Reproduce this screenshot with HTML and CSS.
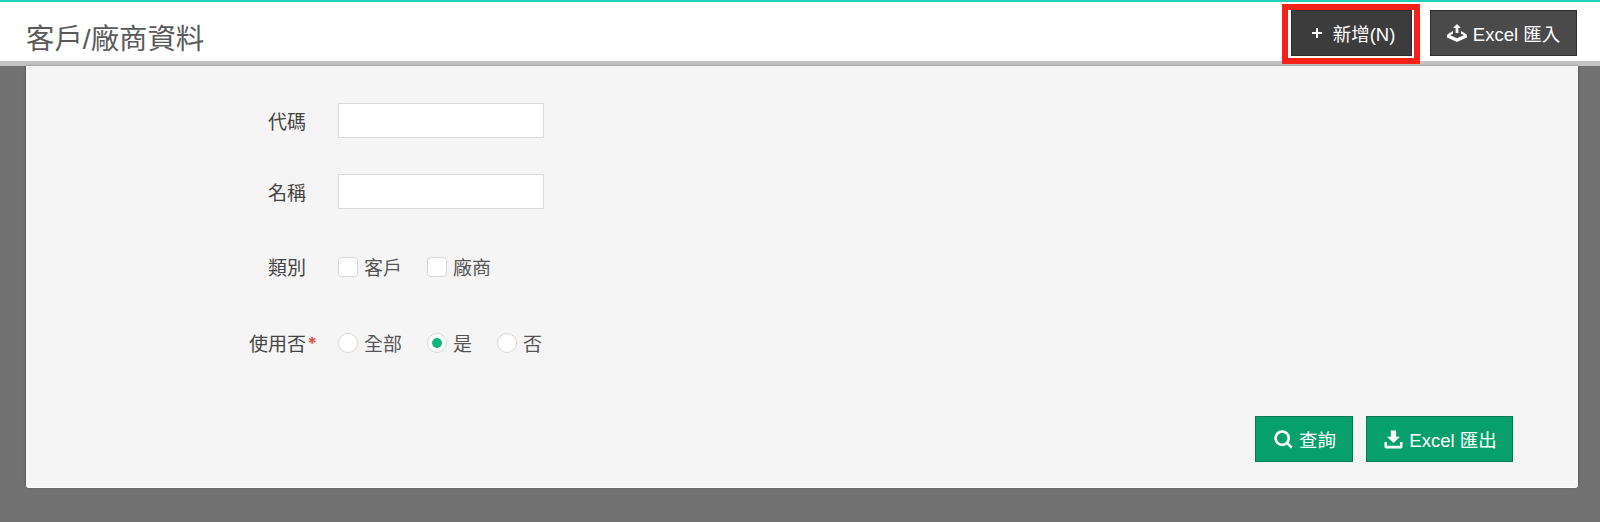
FILE: index.html
```html
<!DOCTYPE html>
<html lang="zh-Hant">
<head>
  <meta charset="UTF-8" />
  <title>客戶/廠商資料</title>
  <link rel="stylesheet" href="styles.css">
</head>
<body>

<header class="topbar">
  <h1>客戶/廠商資料</h1>
  <div class="topbar-actions">
    <button class="btn btn-dark btn-new" type="button">
      <svg class="icon-plus" viewBox="0 0 12 12"><path d="M6 1v10M1 6h10" /></svg>
      新增(N)
      <span class="mark"></span>
    </button>
    <button class="btn btn-dark btn-import" type="button">
      <svg class="icon" viewBox="0 0 20 18"><path d="M10 0l4 4h-2.6v5h-2.8v-5h-2.6z" /><path d="M6 7l-5 3q-1 .5-1 1.5v2l9 4.1q1 .4 2 0l9-4.1v-2q0-1-1-1.5l-5-3v2.5l2.8 1.8-6.8 3-6.8-3 2.8-1.8z" /></svg>
      Excel 匯入
    </button>
  </div>
</header>

<main class="panel">
  <form class="search-form">
    <div class="row row-code">
      <label>代碼</label>
      <input type="text" />
    </div>
    <div class="row row-name">
      <label>名稱</label>
      <input type="text" />
    </div>
    <div class="row row-type">
      <label>類別</label>
      <div class="options">
        <span class="option"><i class="check"></i>客戶</span>
        <span class="option"><i class="check"></i>廠商</span>
      </div>
    </div>
    <div class="row row-active">
      <label>使用否<span class="required">✱</span></label>
      <div class="options">
        <span class="option"><i class="radio"></i>全部</span>
        <span class="option option-short"><i class="radio on"></i>是</span>
        <span class="option"><i class="radio"></i>否</span>
      </div>
    </div>
    <div class="form-actions">
      <button class="btn btn-green btn-search" type="button">
        <svg class="icon" viewBox="0 0 20 20"><circle cx="8.6" cy="8.6" r="7" /><path d="M13.6 13.6l5 5" /></svg>
        查詢
      </button>
      <button class="btn btn-green btn-export" type="button">
        <svg class="icon icon-fill" viewBox="0 0 20 20"><path d="M7.2 0.5h5.6v6.6h4l-6.8 6.6-6.8-6.6h4z" /><path d="M0.5 12.5h2.6v4.2h13.8v-4.2h2.6v5.2a1.8 1.8 0 0 1-1.8 1.8h-15.4a1.8 1.8 0 0 1-1.8-1.8z" /></svg>
        Excel 匯出
      </button>
    </div>
  </form>
</main>

</body>
</html>
```

FILE: styles.css
```css
* {
  box-sizing: border-box;
  margin: 0;
  padding: 0;
}

body {
  height: 522px;
  overflow: hidden;
  background: #737272;
  color: #555;
  font-family: 'Liberation Sans', 'Noto Sans CJK TC', sans-serif;
  font-size: 19px;
}

/* Top bar */
.topbar {
  height: 66px;
  display: flex;
  justify-content: space-between;
  background: #fff;
  border-top: 2px solid #1fcfb6;
  border-bottom: 5px solid #c4c4c4;
  padding: 8px 23px 0 26px;
}

.topbar h1 {
  font-size: 28.4px;
  font-weight: 400;
  color: #5a5a5a;
  line-height: 40px;
  padding-top: 9px;
}

.topbar-actions {
  display: flex;
  gap: 18px;
}

.btn {
  height: 46px;
  display: inline-flex;
  align-items: center;
  justify-content: center;
  border: 1px solid;
  border-radius: 0;
  color: #fff;
  font-family: inherit;
  font-size: 18.5px;
}

.btn-dark {
  background: #4a4a4a;
  border-color: #2d2d2d;
}

.btn-new {
  position: relative;
  width: 121px;
  gap: 10px;
  padding-left: 3px;
  background: #3c3c3c;
}

.btn-import {
  width: 147px;
  gap: 6px;
}

.mark {
  position: absolute;
  top: -7px;
  left: -10px;
  right: -9px;
  bottom: -9px;
  border: 6px solid #f5211a;
}

.icon-plus {
  width: 12px;
  height: 12px;
  fill: none;
  stroke: #fff;
  stroke-width: 2;
}

.btn-import .icon {
  width: 20px;
  height: 18px;
  fill: #fff;
}

/* Panel */
.panel {
  height: 421px;
  margin: 0 22px 0 26px;
  background: #f5f5f5;
  border-radius: 0 0 3px 3px;
  box-shadow: 0 1px 0 #fff, 0 0 3px rgba(0, 0, 0, 0.35);
}

.search-form {
  padding-top: 37px;
}

.row {
  display: grid;
  grid-template-columns: 280px 1fr;
  column-gap: 32px;
  align-items: center;
  height: 35px;
}

.row label {
  position: relative;
  text-align: right;
  color: #444;
  font-size: 19px;
}

.row input {
  width: 206px;
  height: 35px;
  background: #fff;
  border: 1px solid #d9d9d9;
}

.row-name {
  margin-top: 36px;
}

.row-type {
  margin-top: 40px;
}

.row-active {
  margin-top: 41px;
}

.required {
  position: absolute;
  left: 100%;
  top: 6px;
  margin-left: 2px;
  color: #e25a5a;
  font-family: 'DejaVu Sans', sans-serif;
  font-size: 10px;
}

.options {
  display: flex;
}

.option {
  display: flex;
  align-items: center;
  gap: 6px;
  width: 89px;
  color: #555;
}

.option-short {
  width: 70px;
}

.check, .radio {
  width: 20px;
  height: 20px;
  background: #fff;
  border: 1px solid #d6d6d6;
}

.check {
  border-radius: 4px;
}

.radio {
  position: relative;
  border-radius: 50%;
}

.radio.on::after {
  content: "";
  position: absolute;
  top: 4px;
  left: 4px;
  width: 10px;
  height: 10px;
  border-radius: 50%;
  background: #12b57a;
}

.form-actions {
  display: flex;
  justify-content: flex-end;
  gap: 13px;
  margin-top: 56px;
  padding-right: 65px;
}

.btn-green {
  background: #07a06d;
  border-color: #067a53;
}

.btn-search {
  width: 98px;
  gap: 6px;
  padding-left: 2px;
}

.btn-export {
  width: 147px;
  gap: 6px;
  padding-left: 2px;
}

.btn-search .icon {
  width: 19px;
  height: 19px;
  fill: none;
  stroke: #fff;
  stroke-width: 2.8;
}

.icon-fill {
  width: 19px;
  height: 19px;
  fill: #fff;
}
```
